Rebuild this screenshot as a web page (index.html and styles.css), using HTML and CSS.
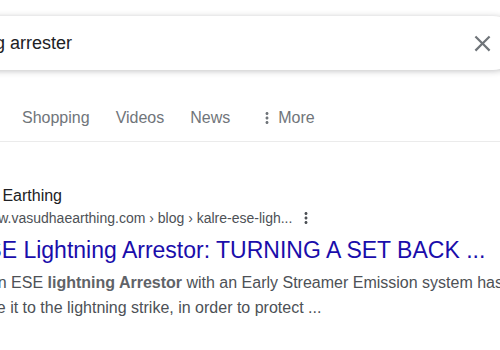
FILE: index.html
```html
<!DOCTYPE html>
<html lang="en">
<head>
  <meta charset="UTF-8">
  <title>lightning arrester - Search</title>
  <link rel="stylesheet" href="styles.css">
</head>
<body>
  <header class="search-bar">
    <span class="query">lightning arrester</span>
    <svg class="clear-icon" viewBox="0 0 24 24"><path d="M19 6.41L17.59 5 12 10.59 6.41 5 5 6.41 10.59 12 5 17.59 6.41 19 12 13.41 17.59 19 19 17.59 13.41 12z"/></svg>
  </header>

  <nav class="tabs">
    <a class="tab" href="#">Shopping</a>
    <a class="tab" href="#">Videos</a>
    <a class="tab" href="#">News</a>
    <a class="tab tab-more" href="#">
      <svg class="dots" viewBox="0 0 24 24"><path d="M12 8c1.1 0 2-.9 2-2s-.9-2-2-2-2 .9-2 2 .9 2 2 2zm0 2c-1.1 0-2 .9-2 2s.9 2 2 2 2-.9 2-2-.9-2-2-2zm0 6c-1.1 0-2 .9-2 2s.9 2 2 2 2-.9 2-2-.9-2-2-2z"/></svg>
      More
    </a>
  </nav>

  <main class="result">
    <div class="site">
      <span class="favicon"></span>
      <div class="site-text">
        <div class="site-name">Vasudha Earthing</div>
        <div class="site-url">
          <cite>https://www.vasudhaearthing.com › blog › kalre-ese-ligh...</cite>
          <svg class="dots result-menu" viewBox="0 0 24 24"><path d="M12 8c1.1 0 2-.9 2-2s-.9-2-2-2-2 .9-2 2 .9 2 2 2zm0 2c-1.1 0-2 .9-2 2s.9 2 2 2 2-.9 2-2-.9-2-2-2zm0 6c-1.1 0-2 .9-2 2s.9 2 2 2 2-.9 2-2-.9-2-2-2z"/></svg>
        </div>
      </div>
    </div>
    <h3 class="title"><a href="#">ESE Lightning Arrestor: TURNING A SET BACK ...</a></h3>
    <p class="snippet">In an ESE <b>lightning Arrestor</b> with an Early Streamer Emission system has the ability to<br>raise it to the lightning strike, in order to protect ...</p>
  </main>
</body>
</html>
```

FILE: styles.css
```css
body {
  margin: 0;
  font-family: "Liberation Sans", Arial, sans-serif;
  background: #fff;
  overflow: hidden;
}
.search-bar {
  display: flex;
  align-items: center;
  height: 54px;
  margin: 16px -20px 0 -80px;
  padding: 0 24px 0 18px;
  border-radius: 27px;
  box-shadow: 0 1px 6px rgba(32, 33, 36, 0.28);
}
.query {
  flex: 1;
  font-size: 18px;
  color: #202124;
  white-space: nowrap;
}
.clear-icon {
  width: 27px;
  height: 27px;
  fill: #70757a;
}
.tabs {
  display: flex;
  gap: 26px;
  margin-top: 38px;
  padding: 0 0 13px 22px;
  border-bottom: 1px solid #ebebeb;
}
.tab {
  font-size: 16px;
  line-height: 20px;
  color: #70757a;
  text-decoration: none;
}
.tab-more {
  display: flex;
  align-items: center;
  gap: 2px;
}
.dots {
  width: 18px;
  height: 18px;
  fill: #70757a;
}
.tab-more .dots {
  margin-left: 2px;
}
.result {
  margin: 44px 0 0 -29px;
}
.site {
  display: flex;
  align-items: center;
  gap: 12px;
  margin-left: -73px;
}
.favicon {
  width: 26px;
  height: 26px;
  border-radius: 50%;
  background: #f1f3f4;
  border: 1px solid #dadce0;
  box-sizing: border-box;
}
.site-name {
  font-size: 16px;
  line-height: 20px;
  color: #202124;
}
.site-url {
  display: flex;
  align-items: center;
  margin-top: 2px;
}
.site-url cite {
  font-style: normal;
  font-size: 14px;
  line-height: 20px;
  color: #4d5156;
  white-space: nowrap;
}
.result-menu {
  margin-left: 5px;
  fill: #4d5156;
}
.title {
  margin: 8px 0 0;
  font-size: 23px;
  line-height: 28px;
  font-weight: normal;
  white-space: nowrap;
}
.title a {
  color: #1a0dab;
  text-decoration: none;
}
.snippet {
  margin: 6px 0 0;
  font-size: 16px;
  line-height: 25px;
  color: #4d5156;
  white-space: nowrap;
}
.snippet b {
  color: #5f6368;
}
```
